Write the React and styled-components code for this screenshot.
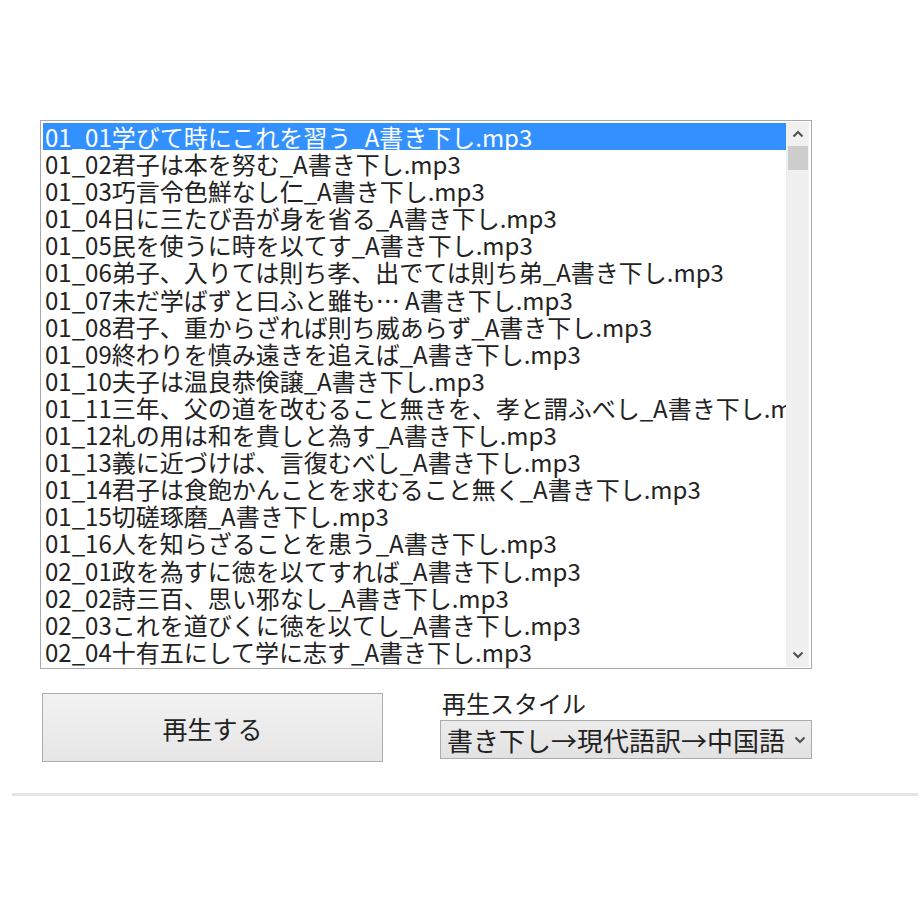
import React, { useState } from 'react';
import styled, { createGlobalStyle } from 'styled-components';

const GlobalStyle = createGlobalStyle`
  body {
    margin: 0;
    background: #ffffff;
    font-family: "Noto Sans CJK JP", "Liberation Sans", sans-serif;
  }
`;

const Page = styled.div`
  width: 920px;
  height: 920px;
  padding-top: 120px;
  box-sizing: border-box;
`;

const Panel = styled.div`
  margin-left: 40px;
  width: 772px;
`;

const ListBox = styled.div`
  display: flex;
  height: 549px;
  border: 1px solid #a9a9a9;
  box-sizing: border-box;
  background: #fff;
`;

const Rows = styled.div`
  flex: 1;
  padding: 2px 0 0 2px;
  overflow: hidden;
`;

const Row = styled.div`
  height: 27.1px;
  line-height: 27px;
  font-size: 24px;
  white-space: nowrap;
  padding-left: 2px;
  color: ${p => (p.selected ? '#ffffff' : '#222222')};
  background: ${p => (p.selected ? '#3391ff' : 'transparent')};
  cursor: default;
`;

const ScrollBar = styled.div`
  width: 23px;
  margin: 1px 2px 1px 0;
  background: #f0f0f0;
  display: flex;
  flex-direction: column;
  align-items: center;
`;

const Arrow = styled.div`
  height: 24px;
  width: 100%;
  display: flex;
  align-items: center;
  justify-content: center;
`;

const Thumb = styled.div`
  width: 20px;
  height: 24px;
  background: #cdcdcd;
`;

const Track = styled.div`
  flex: 1;
`;

const Controls = styled.div`
  display: flex;
  align-items: flex-start;
  margin-top: 24px;
`;

const PlayButton = styled.button`
  width: 341px;
  height: 69px;
  margin-left: 2px;
  border: 1px solid #adadad;
  background: linear-gradient(#f2f2f2, #e6e6e6);
  font-family: inherit;
  font-size: 25px;
  color: #222;
  padding: 0;
`;

const StyleGroup = styled.div`
  margin-left: 57px;
  display: flex;
  flex-direction: column;
`;

const Label = styled.div`
  font-size: 24px;
  line-height: 26px;
  color: #222;
  margin-left: 2px;
  margin-top: -3px;
`;

const SelectBox = styled.div`
  width: 372px;
  height: 39px;
  margin-top: 4px;
  border: 1px solid #acacac;
  box-sizing: border-box;
  background: linear-gradient(#ececec, #e2e2e2);
  display: flex;
  align-items: center;
  overflow: hidden;
`;

const SelectText = styled.div`
  flex: 1;
  font-size: 26px;
  line-height: 37px;
  white-space: nowrap;
  overflow: hidden;
  padding-left: 6px;
  color: #222;
`;

const Caret = styled.div`
  width: 22px;
  display: flex;
  justify-content: center;
`;

const Divider = styled.hr`
  margin: 31px 2px 0 12px;
  border: none;
  height: 3px;
  background: #e4e4e4;
`;

const Chevron = ({ up }) => (
  <svg width="12" height="8" viewBox="0 0 12 8">
    <path
      d={up ? 'M1.5 6.5 L6 2 L10.5 6.5' : 'M1.5 1.5 L6 6 L10.5 1.5'}
      fill="none"
      stroke="#505050"
      strokeWidth="2"
    />
  </svg>
);

const tracks = [
  '01_01学びて時にこれを習う_A書き下し.mp3',
  '01_02君子は本を努む_A書き下し.mp3',
  '01_03巧言令色鮮なし仁_A書き下し.mp3',
  '01_04日に三たび吾が身を省る_A書き下し.mp3',
  '01_05民を使うに時を以てす_A書き下し.mp3',
  '01_06弟子、入りては則ち孝、出でては則ち弟_A書き下し.mp3',
  '01_07未だ学ばずと曰ふと雖も… A書き下し.mp3',
  '01_08君子、重からざれば則ち威あらず_A書き下し.mp3',
  '01_09終わりを慎み遠きを追えば_A書き下し.mp3',
  '01_10夫子は温良恭倹譲_A書き下し.mp3',
  '01_11三年、父の道を改むること無きを、孝と謂ふべし_A書き下し.mp3',
  '01_12礼の用は和を貴しと為す_A書き下し.mp3',
  '01_13義に近づけば、言復むべし_A書き下し.mp3',
  '01_14君子は食飽かんことを求むること無く_A書き下し.mp3',
  '01_15切磋琢磨_A書き下し.mp3',
  '01_16人を知らざることを患う_A書き下し.mp3',
  '02_01政を為すに徳を以てすれば_A書き下し.mp3',
  '02_02詩三百、思い邪なし_A書き下し.mp3',
  '02_03これを道びくに徳を以てし_A書き下し.mp3',
  '02_04十有五にして学に志す_A書き下し.mp3',
];

export default function App() {
  const [selected, setSelected] = useState(0);

  return (
    <Page>
      <GlobalStyle />
      <Panel>
        <ListBox>
          <Rows>
            {tracks.map((name, i) => (
              <Row key={name} selected={i === selected} onClick={() => setSelected(i)}>
                {name}
              </Row>
            ))}
          </Rows>
          <ScrollBar>
            <Arrow><Chevron up /></Arrow>
            <Thumb />
            <Track />
            <Arrow><Chevron /></Arrow>
          </ScrollBar>
        </ListBox>
        <Controls>
          <PlayButton>再生する</PlayButton>
          <StyleGroup>
            <Label>再生スタイル</Label>
            <SelectBox>
              <SelectText>書き下し→現代語訳→中国語</SelectText>
              <Caret><Chevron /></Caret>
            </SelectBox>
          </StyleGroup>
        </Controls>
      </Panel>
      <Divider />
    </Page>
  );
}
